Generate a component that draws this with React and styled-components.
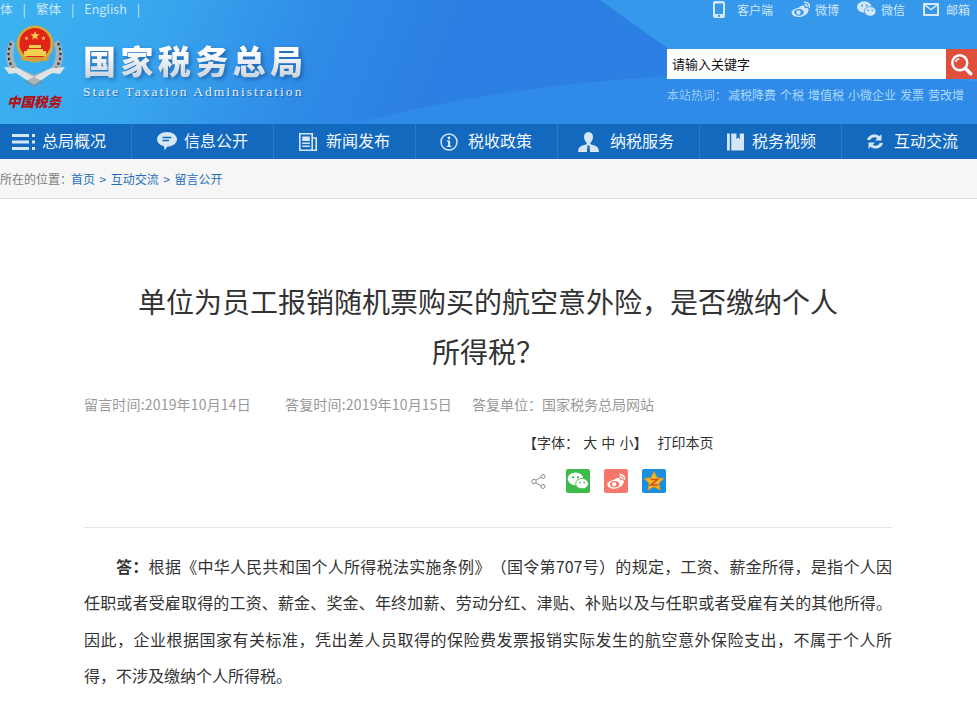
import React from "react";
import styled, { createGlobalStyle } from "styled-components";

const CN = `"Noto Sans CJK SC", "Liberation Sans", sans-serif`;

const GlobalStyle = createGlobalStyle`
  html, body { margin: 0; padding: 0; background: #fff; }
  body { font-family: ${CN}; overflow: hidden; height: 706px; text-spacing-trim: space-all; }
`;

const Masthead = styled.header`
  position: relative;
  height: 124px;
  overflow: hidden;
  display: flex;
  flex-direction: column;
  background:
    radial-gradient(ellipse 781px 300px at 790px 372px, #308be8 99.7%, transparent 100%),
    linear-gradient(35.5deg, transparent 67.2%, #3598ea 67.3%),
    linear-gradient(112deg, #3cb3f1 0%, #38a6ee 16%, #2f8ae6 33%, #2c80e3 45%, #2c80e3 100%);
`;

const TopBar = styled.div`
  display: flex;
  justify-content: space-between;
  height: 18px;
  font-size: 12.5px;
  line-height: 17px;
  color: #cfe6fa;
`;

const LangList = styled.div`
  display: flex;
  margin-left: -12.5px;
`;

const Lang = styled.span`
  margin-right: 10px;
  &::after {
    content: "|";
    margin-left: 10px;
  }
`;

const Channels = styled.div`
  display: flex;
  align-items: center;
  margin-right: 7px;
`;

const Channel = styled.span`
  display: flex;
  align-items: center;
  gap: ${(p) => p.$gap}px;
  margin-left: ${(p) => p.$left}px;
  font-size: 12px;
  svg { display: block; }
`;

const BrandRow = styled.div`
  display: flex;
  justify-content: space-between;
  flex: 1;
`;

const Brand = styled.div`
  display: flex;
`;

const EmblemBox = styled.div`
  width: 83px;
  margin-top: 7px;
  display: flex;
  flex-direction: column;
  align-items: flex-start;
  padding-left: 3px;
  box-sizing: border-box;
  svg { display: block; margin-bottom: 6px; }
`;

const Motto = styled.div`
  font-size: 13.5px;
  line-height: 17px;
  font-weight: 900;
  font-style: italic;
  color: #b30f12;
  white-space: nowrap;
  margin-left: 4px;
`;

const BrandText = styled.div`
  margin-top: 22px;
`;

const BrandName = styled.div`
  font-size: 33px;
  line-height: 41px;
  font-weight: 900;
  letter-spacing: 4.4px;
  background: linear-gradient(180deg, #ffffff 30%, #c3cdd9 100%);
  -webkit-background-clip: text;
  background-clip: text;
  color: transparent;
  filter: drop-shadow(2px 2px 2px rgba(15, 60, 130, 0.55));
`;

const BrandEn = styled.div`
  font-family: "Liberation Serif", serif;
  font-size: 13.5px;
  line-height: 16px;
  margin-top: 3px;
  letter-spacing: 2.03px;
  color: #e6eef6;
  text-shadow: 1px 1px 1px rgba(15, 60, 130, 0.6);
  white-space: nowrap;
`;

const SearchCol = styled.div`
  width: 310px;
  padding-top: 31px;
  font-size: 12px;
`;

const SearchBar = styled.div`
  display: flex;
  height: 30px;
  background: #fff;
`;

const SearchInput = styled.div`
  flex: 1;
  padding-left: 5px;
  font-size: 13px;
  line-height: 30px;
  color: #111;
`;

const SearchButton = styled.div`
  width: 31px;
  background: #e04e3c;
  display: flex;
  align-items: center;
  justify-content: center;
`;

const HotWords = styled.div`
  margin-top: 7px;
  display: flex;
  color: #a9d9fb;
  line-height: 18px;
  white-space: nowrap;
`;

const HotLabel = styled.span`
  margin-right: 1px;
  opacity: 0.85;
`;

const HotWord = styled.span`
  margin-right: 4px;
`;

const NavBar = styled.nav`
  display: flex;
  height: 35px;
  background: #1369bd;
  overflow: hidden;
  margin-left: -10px;
`;

const NavItem = styled.div`
  flex: 0 0 142px;
  box-sizing: border-box;
  display: grid;
  grid-template-columns: 26px auto;
  column-gap: 4px;
  align-items: center;
  padding-left: 22px;
  font-size: 16px;
  color: #f2f8fd;
  border-right: 1px solid #2a7cc8;
  svg { display: block; margin-left: ${(p) => p.$iconLeft}px; }
`;

const NavLabel = styled.span`
  margin-bottom: 3px;
  white-space: nowrap;
`;

const Crumbs = styled.div`
  height: 40px;
  box-sizing: border-box;
  background: #f6f6f6;
  border-bottom: 1px solid #dedede;
  font-size: 12px;
  line-height: 40px;
  color: #7d7d7d;
  white-space: nowrap;
`;

const CrumbLabel = styled.span`
  margin-right: -1px;
`;

const CrumbLink = styled.span`
  color: #1f6fb8;
`;

const CrumbSep = styled.span`
  margin: 0 4.5px;
  color: #1f6fb8;
`;

const Article = styled.main`
  margin: 0 85px 0 84px;
`;

const Title = styled.h1`
  margin: 77px 0 0;
  text-align: center;
  font-size: 28px;
  line-height: 50px;
  font-weight: 400;
  color: #333;
`;

const Meta = styled.div`
  margin-top: 18px;
  display: flex;
  font-size: 14px;
  line-height: 20px;
  color: #999;
`;

const MetaItem = styled.span`
  flex: 0 0 ${(p) => p.$width}px;
  letter-spacing: ${(p) => p.$spacing || 0}px;
`;

const FontTools = styled.div`
  margin-top: 18px;
  padding-left: 439px;
  display: flex;
  font-size: 14px;
  line-height: 20px;
  color: #333;
`;

const FontSizes = styled.span`
  margin-right: 10px;
  word-spacing: 1px;
`;

const ShareRow = styled.div`
  margin-top: 17px;
  padding-left: 447px;
  display: flex;
  align-items: center;
  height: 24px;
`;

const ShareLabel = styled.span`
  width: 35px;
  display: flex;
  svg { display: block; }
`;

const ShareIcon = styled.span`
  width: 24px;
  height: 24px;
  margin-right: 14px;
  border-radius: 2px;
  background: ${(p) => p.$bg};
  svg { display: block; }
`;

const Rule = styled.hr`
  margin: 34px 0 0;
  border: 0;
  border-top: 1px solid #e3e3e3;
`;

const Body = styled.p`
  margin: 20px 0 0;
  font-size: 16px;
  line-height: 36.4px;
  color: #333;
  text-indent: 32px;
  text-align: justify;
`;

const Phone = () => (
  <svg width="12" height="17" viewBox="0 0 12 17">
    <path fill="#d5e8f9" fillRule="evenodd" d="M2 0h8a2 2 0 0 1 2 2v13a2 2 0 0 1-2 2H2a2 2 0 0 1-2-2V2a2 2 0 0 1 2-2zm0 2.500V13h8V2.500zM6 13.800a1.100 1.100 0 1 0 0 2.200 1.100 1.100 0 0 0 0-2.200z" />
  </svg>
);

const WeiboGlyph = ({ body = "#d5e8f9", eye = "#3597e9", arc = "#d5e8f9" }) => (
  <>
    <path fill={body} d="M8 6.500c2.500-2.200 4.600-2.400 5.400-1.500.5.6.3 1.600 0 2.500 2-.8 4.200-.6 4.200 1.400C17.600 12.500 12.600 16 7.600 16 3.800 16 .5 14.300 .5 11.300.5 9.500 3.800 7.800 8 6.500z" />
    <ellipse cx="8" cy="11.300" rx="4.800" ry="3.400" fill={eye} />
    <circle cx="7.500" cy="11.500" r="2.200" fill={body} />
    <path fill="none" stroke={arc} strokeWidth="1.500" d="M13 1.200c3.500-.5 6 2.300 5.300 5.600M13.500 3.700c1.700-.3 2.700 1 2.400 2.500" />
  </>
);

const Weibo = () => (
  <svg width="19" height="16" viewBox="0 0 19 16">
    <WeiboGlyph />
  </svg>
);

const Wechat = ({ w = 19, h = 16, fill = "#d5e8f9", eye = "#3597e9", box = "0 0 19 16" }) => (
  <svg width={w} height={h} viewBox={box}>
    <ellipse cx="7.200" cy="6" rx="7.200" ry="5.800" fill={fill} />
    <ellipse cx="13.200" cy="10.400" rx="5.800" ry="4.800" fill={fill} stroke={eye} strokeWidth="0.800" />
    <circle cx="5" cy="4.500" r="1" fill={eye} />
    <circle cx="9.500" cy="4.500" r="1" fill={eye} />
    <circle cx="11.300" cy="9.400" r="0.800" fill={eye} />
    <circle cx="15.200" cy="9.400" r="0.800" fill={eye} />
  </svg>
);

const Mail = () => (
  <svg width="16" height="13" viewBox="0 0 16 13">
    <path fill="#d5e8f9" fillRule="evenodd" d="M0 0h16v13H0zm2 3v8h12V3L8 7.500zM3.200 2 8 5.700 12.800 2z" />
  </svg>
);

const Emblem = () => (
  <svg width="63" height="62" viewBox="0 0 63 62">
    {/* wreath */}
    <path fill="#aab2b8" d="M8 15C1 25 2 38 8 46l23 10 24-10c6-8 7-21 0-31l-4 3c3 9 2 19-3 25L31 50 15 43c-5-6-6-16-3-25z" />
    <path fill="none" stroke="#33383d" strokeWidth="2.200" strokeDasharray="2.500 2.500" d="M8 18C4 27 5 36 10 43M55 18c4 9 3 18-2 25" />
    <circle cx="32" cy="19" r="18.500" fill="#d3ab3a" />
    <circle cx="32" cy="18.500" r="15.500" fill="#e2231a" />
    <path fill="#f3cf4b" d="M32 6l1.200 3.300h3.400l-2.700 2.100.9 3.300-2.800-1.900-2.800 1.900.9-3.300-2.700-2.100h3.400zM23.500 11l.6 1.500h1.600l-1.300 1 .5 1.600-1.400-.9-1.400.9.5-1.600-1.300-1h1.600zM40.500 11l.6 1.500h1.600l-1.300 1 .5 1.600-1.400-.9-1.400.9.5-1.600-1.300-1h1.600z" />
    <path fill="#f3cf4b" d="M24 24h16v2h3v5H21v-5h3zM26 20h12v3H26z" />
    <path fill="#d3a03a" d="M17 32h30l-3 4H20z" />
    {/* ribbon */}
    <path fill="#dfe3e6" d="M1 42l14 1 16 9 17-9 14-1-5 7-8-1-18 12-18-12-7 1z" />
    <path fill="#7f888f" d="M31 52l10 5-10 5-10-5z" opacity="0.55" />
  </svg>
);

const Magnifier = () => (
  <svg width="23" height="23" viewBox="0 0 20 20">
    <circle cx="8.500" cy="8.500" r="6.500" fill="none" stroke="#fff" strokeWidth="2.200" />
    <path stroke="#fff" strokeWidth="3" strokeLinecap="round" d="M13.500 13.500 18 18" />
    <path stroke="#fff" strokeWidth="1.200" fill="none" d="M5 8a3.500 3.500 0 0 1 3-3" />
  </svg>
);

const MenuIcon = () => (
  <svg width="23" height="16" viewBox="0 0 23 16">
    <path fill="#d6e6f5" d="M0 0h17v3H0zM0 6.500h17v3H0zM0 13h17v3H0zM20 0h3v3h-3zM20 6.500h3v3h-3zM20 13h3v3h-3z" />
  </svg>
);

const ChatIcon = () => (
  <svg width="20" height="19" viewBox="0 0 20 19">
    <path fill="#d6e6f5" d="M10 0c5.500 0 10 3.200 10 7.300 0 4-4.500 7.300-9.500 7.300L7.500 18.500l-.5-4.300C3 13.300 0 10.600 0 7.300 0 3.200 4.500 0 10 0z" />
    <path stroke="#1369bd" strokeWidth="1.300" d="M5.500 5.500h9M5.500 8.500h6.500" />
  </svg>
);

const NewsIcon = () => (
  <svg width="18" height="18" viewBox="0 0 18 18">
    <path fill="none" stroke="#d6e6f5" strokeWidth="1.600" d="M.8.800h12.400v16.400H.8zM13.200 5h4v12.200h-4z" />
    <path fill="#d6e6f5" d="M3.200 3.500h7.600v4.500H3.200zM3.200 9.500h7.600v1.400H3.200zM3.200 12.500h7.600v1.400H3.200z" />
  </svg>
);

const InfoIcon = () => (
  <svg width="18" height="18" viewBox="0 0 18 18">
    <circle cx="9" cy="9" r="8" fill="none" stroke="#d6e6f5" strokeWidth="1.500" />
    <circle cx="9" cy="5" r="1.400" fill="#d6e6f5" />
    <path fill="#d6e6f5" d="M6.800 7.500h3.400v5.300h1.200v1.300H6.800v-1.300H8V8.800H6.800z" />
  </svg>
);

const UserIcon = () => (
  <svg width="21" height="20" viewBox="0 0 21 20">
    <path fill="#d6e6f5" d="M10.500 0c3 0 4.500 2.200 4.500 5 0 2.500-1.300 4.600-2.600 5.700v1.500c3.400.8 7 2 8 4.300L21 20H0l.600-3.500c1-2.300 4.600-3.500 8-4.300v-1.500C7.300 9.600 6 7.500 6 5c0-2.800 1.500-5 4.500-5z" />
    <path fill="#1369bd" d="M9.500 13.500h2l.6 6.500h-3.200z" />
  </svg>
);

const BookIcon = () => (
  <svg width="17" height="18" viewBox="0 0 18 18">
    <path fill="#d6e6f5" d="M0 0h3v18H0zM4.500 0H10v6l1.700-1.800L13.500 6V0H18v18H4.500z" />
  </svg>
);

const SwapIcon = () => (
  <svg width="18" height="17" viewBox="0 0 18 17">
    <path fill="#d6e6f5" d="M1 7C1.800 3.500 5 1.500 8.500 1.500c2 0 3.700.6 5 1.800L15.500 1v6.500H9l2.300-2.200c-.8-.7-1.700-1-2.800-1C6.500 4.300 5 5.300 4.300 7zM17 10c-.8 3.500-4 5.500-7.500 5.500-2 0-3.700-.6-5-1.800L2.500 16V9.500H9l-2.300 2.200c.8.7 1.700 1 2.800 1 2 0 3.500-1 4.200-2.700z" />
  </svg>
);

const ShareGlyph = () => (
  <svg width="15" height="15" viewBox="0 0 15 15">
    <path fill="none" stroke="#8a8a8a" strokeWidth="1" d="M4.500 6.500 10 3M4.500 8.500 10 12" />
    <circle cx="3" cy="7.500" r="2.200" fill="#fff" stroke="#8a8a8a" />
    <circle cx="12" cy="2.500" r="2" fill="#fff" stroke="#8a8a8a" />
    <circle cx="12" cy="12.500" r="2" fill="#fff" stroke="#8a8a8a" />
  </svg>
);

const navItems = [
  { label: "总局概况", icon: <MenuIcon />, left: 0 },
  { label: "信息公开", icon: <ChatIcon />, left: 3 },
  { label: "新闻发布", icon: <NewsIcon />, left: 3 },
  { label: "税收政策", icon: <InfoIcon />, left: 2 },
  { label: "纳税服务", icon: <UserIcon />, left: -2 },
  { label: "税务视频", icon: <BookIcon />, left: 5 },
  { label: "互动交流", icon: <SwapIcon />, left: 2 },
];

const hotWords = ["减税降费", "个税", "增值税", "小微企业", "发票", "营改增"];

const App = () => (
  <>
    <GlobalStyle />
    <Masthead>
      <TopBar>
        <LangList>
          <Lang>简体</Lang>
          <Lang>繁体</Lang>
          <Lang>English</Lang>
        </LangList>
        <Channels>
          <Channel $gap={12} $left={0}><Phone />客户端</Channel>
          <Channel $gap={5} $left={18}><Weibo />微博</Channel>
          <Channel $gap={5} $left={18}><Wechat />微信</Channel>
          <Channel $gap={7} $left={18}><Mail />邮箱</Channel>
        </Channels>
      </TopBar>
      <BrandRow>
        <Brand>
          <EmblemBox>
            <Emblem />
            <Motto>中国税务</Motto>
          </EmblemBox>
          <BrandText>
            <BrandName>国家税务总局</BrandName>
            <BrandEn>State Taxation Administration</BrandEn>
          </BrandText>
        </Brand>
        <SearchCol>
          <SearchBar>
            <SearchInput>请输入关键字</SearchInput>
            <SearchButton><Magnifier /></SearchButton>
          </SearchBar>
          <HotWords>
            <HotLabel>本站热词&#xFF1A;</HotLabel>
            {hotWords.map((w) => <HotWord key={w}>{w}</HotWord>)}
          </HotWords>
        </SearchCol>
      </BrandRow>
    </Masthead>
    <NavBar>
      {navItems.map(({ label, icon, left }) => (
        <NavItem key={label} $iconLeft={left}>{icon}<NavLabel>{label}</NavLabel></NavItem>
      ))}
    </NavBar>
    <Crumbs>
      <CrumbLabel>所在的位置&#xFF1A;</CrumbLabel><CrumbLink>首页</CrumbLink><CrumbSep>&gt;</CrumbSep><CrumbLink>互动交流</CrumbLink><CrumbSep>&gt;</CrumbSep><CrumbLink>留言公开</CrumbLink>
    </Crumbs>
    <Article>
      <Title>
        单位为员工报销随机票购买的航空意外险&#xFF0C;是否缴纳个人<br />
        所得税&#xFF1F;
      </Title>
      <Meta>
        <MetaItem $width={201} $spacing={0.18}>留言时间:2019年10月14日</MetaItem>
        <MetaItem $width={187} $spacing={0.18}>答复时间:2019年10月15日</MetaItem>
        <MetaItem $width={220}>答复单位&#xFF1A;国家税务总局网站</MetaItem>
      </Meta>
      <FontTools>
        <FontSizes>【字体&#xFF1A; 大 中 小】</FontSizes>
        <span>打印本页</span>
      </FontTools>
      <ShareRow>
        <ShareLabel><ShareGlyph /></ShareLabel>
        <ShareIcon $bg="#3cbb48">
          <Wechat w={24} h={24} fill="#fff" eye="#3cbb48" box="-1.500 -3 22 22" />
        </ShareIcon>
        <ShareIcon $bg="#f5786a">
          <svg width="24" height="24" viewBox="-3 -4 25 24">
            <WeiboGlyph body="#fff" eye="#f5786a" arc="#fff" />
          </svg>
        </ShareIcon>
        <ShareIcon $bg="#1a8fe0">
          <svg width="24" height="24" viewBox="0 0 24 24">
            <path fill="#f5b81f" stroke="#e8931a" strokeWidth="0.800" d="M12 2.500l2.900 6.300 6.900.8-5.100 4.700 1.400 6.800-6.100-3.400-6.100 3.400 1.400-6.800-5.100-4.700 6.900-.8z" />
            <path fill="none" stroke="#d9481e" strokeWidth="1.600" d="M8.500 10.500h7l-6.500 5.500h7" />
          </svg>
        </ShareIcon>
      </ShareRow>
      <Rule />
      <Body>
        <b>答&#xFF1A;</b>根据《中华人民共和国个人所得税法实施条例》&#xFF08;国令第707号&#xFF09;的规定&#xFF0C;工资、薪金所得&#xFF0C;是指个人因任职或者受雇取得的工资、薪金、奖金、年终加薪、劳动分红、津贴、补贴以及与任职或者受雇有关的其他所得。因此&#xFF0C;企业根据国家有关标准&#xFF0C;凭出差人员取得的保险费发票报销实际发生的航空意外保险支出&#xFF0C;不属于个人所得&#xFF0C;不涉及缴纳个人所得税。
      </Body>
    </Article>
  </>
);

export default App;
